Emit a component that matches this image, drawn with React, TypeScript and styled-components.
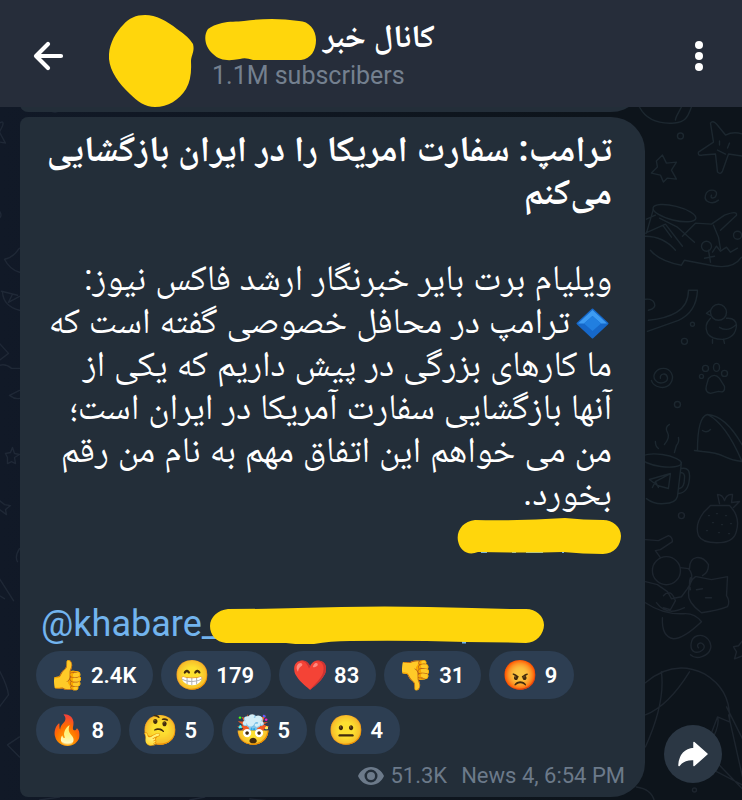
import React from "react";
import styled, { createGlobalStyle } from "styled-components";

const GlobalStyle = createGlobalStyle`
  * { box-sizing: border-box; }
  body { margin: 0; background: #0d141b; }
  button { border: 0; padding: 0; font: inherit; color: inherit; cursor: pointer; }
`;

const latin = `Roboto, "Noto Naskh Arabic", sans-serif`;
const marker = "#ffd60c";

const Page = styled.div`
  min-height: 100vh;
  display: flex;
  flex-direction: column;
  font-family: ${latin};
  color: #fff;
`;

const Header = styled.header`
  height: 107px;
  display: flex;
  align-items: center;
  padding: 0 22px 0 28px;
  background: #262d3a;
`;

const IconButton = styled.button`
  width: 42px;
  height: 42px;
  display: grid;
  place-items: center;
  background: none;
`;

const Avatar = styled.div`
  width: 86px;
  height: 93px;
  margin: 14px 9px 0 39px;
`;

const Identity = styled.div`
  flex: 1;
  min-width: 0;
  padding-top: 4px;
`;

const NameRow = styled.div`
  display: flex;
  align-items: center;
  gap: 6px;
  height: 40px;
`;

const ChannelName = styled.h1`
  margin: 0 0 8px;
  font-size: 32px;
  font-weight: 700;
  line-height: 40px;
  white-space: nowrap;
`;

const Subscribers = styled.div`
  padding-left: 8px;
  font-size: 25px;
  line-height: 32px;
  color: #74808f;
`;

const Chat = styled.main`
  flex: 1;
  position: relative;
  overflow: hidden;
  display: grid;
  grid-template-columns: 20px minmax(0, 625px) 1fr;
  grid-template-rows: 5px auto;
  row-gap: 5px;
  align-content: start;
  padding-bottom: 4px;
  background: linear-gradient(90deg, #111927, #0d141b 80%);
`;

const Wallpaper = styled.svg`
  position: absolute;
  inset: 0;
  width: 100%;
  height: 100%;
`;

const PreviousBubble = styled.div`
  grid-column: 2;
  height: 80px;
  margin-top: -75px;
  border-radius: 8px 34px 34px 8px;
  background: #232e39;
  position: relative;
`;

const Bubble = styled.article`
  grid-column: 2;
  position: relative;
  padding: 11px 0 0;
  border-radius: 8px 34px 34px 8px;
  background: #232e39;
`;

const Copy = styled.div`
  padding: 0 33px 0 21px;
  font-size: 36px;
  line-height: 43px;
`;

const Line = styled.span`
  display: block;
  height: 43px;
  white-space: nowrap;
`;

const Headline = styled.h2`
  margin: 0 0 43px;
  font: inherit;
  font-weight: 700;
`;

const Paragraph = styled.p`
  margin: 0;
`;

const Diamond = styled.svg`
  margin: 0 3px 0 6px;
  vertical-align: -6px;
`;

const SignatureRow = styled.div`
  height: 88px;
  padding-top: 3px;
  display: flex;
  margin-right: -9px;
  justify-content: flex-end;
`;

const HandleRow = styled.div`
  height: 43px;
  display: flex;
  align-items: center;
`;

const Handle = styled.a`
  color: #72b4ee;
  text-decoration: none;
`;

const Scribble = styled.svg<{ $pull?: number }>`
  display: block;
  flex: none;
  margin-left: ${(p) => -(p.$pull ?? 0)}px;
`;

const Reactions = styled.div`
  display: grid;
  gap: 7px;
  padding: 5px 16px 0;
`;

const ReactionRow = styled.div`
  display: flex;
  gap: 8px;
`;

const Reaction = styled.button`
  height: 48px;
  min-width: 85px;
  display: flex;
  align-items: center;
  justify-content: space-between;
  gap: 5px;
  padding: 0 17px 0 13px;
  border-radius: 24px;
  background: #2d3e52;
  font-size: 22px;
  font-weight: 600;
`;

const Emoji = styled.span`
  width: 37px;
  font-family: "Noto Color Emoji", sans-serif;
  font-size: 29px;
  font-weight: 400;
  line-height: 48px;
  display: flex;
  justify-content: center;
`;

const Meta = styled.footer`
  display: flex;
  align-items: center;
  justify-content: flex-end;
  height: 43px;
  padding-right: 20px;
  font-size: 22px;
  color: #6c7a8a;
`;

const Views = styled.span`
  margin: 0 14px 0 6px;
`;

const ShareButton = styled.button`
  grid-column: 3;
  align-self: end;
  position: relative;
  width: 58px;
  height: 58px;
  margin: 0 0 14px 19px;
  border-radius: 50%;
  display: grid;
  place-items: center;
  background: #2b3744;
`;

const reactionRows = [
  [
    ["👍", "2.4K"],
    ["😁", "179"],
    ["❤️", "83"],
    ["👎", "31"],
    ["😡", "9"],
  ],
  [
    ["🔥", "8"],
    ["🤔", "5"],
    ["🤯", "5"],
    ["😐", "4"],
  ],
];

const body = [
  "ما کارهای بزرگی در پیش داریم که یکی از",
  "آنها بازگشایی سفارت آمریکا در ایران است؛",
  "من می خواهم این اتفاق مهم به نام من رقم",
  "بخورد.",
];

function Doodles() {
  return (
    <Wallpaper viewBox="0 107 742 693" preserveAspectRatio="xMidYMin slice" fill="none" strokeWidth="1.4" strokeLinecap="round" strokeLinejoin="round" aria-hidden="true">
      <g stroke="#1c272f">
        <path d="M639 107c8 15 22 17 35 16s14-9 17-16M681 107c-3 6-6 10-6 13" />
        <circle cx="680" cy="136" r="3" />
        <path d="M710 123q2-3 6 1l9 11q8-4 17-1M710 123l3 19-15 10q-1 4 4 3l13-1 2 18q3 3 5-1l6-17 14 2M719 141v4M729 143l-2 5M717 150l8 4" />
        <path d="M662 155l4 8 10-1-5 8 5 9-9-1-4 4-3-7-9-2 6-6-1-6z" />
        <path d="M711 195c-2 4 4 4 5-1s-9-6-11 1 7 10 13 5" />
        <ellipse cx="674" cy="213" rx="22" ry="7" transform="rotate(14 674 213)" />
        <path d="M653 209l-7 24M646 219l9-4M645 233l20-9 17 22M663 226l8 11M659 218l18 9 17 15M682 236l13-13 16 1 13-9q13-5 12 0l-16 15M645 236q18 0 30 14M713 225l5 12 2 12" />
        <circle cx="737" cy="235" r="4" /><circle cx="706" cy="246" r="5" />
        <path d="M712 252l4-6 4 5 6-4 4 5 7-4M650 250q9 11 31 15l3-5 26 5q22 5 31-8M708 250l2 12M704 258l10-2" />
        <path d="M688 290l9 0q-1 22-19 30-14 5-31 11M688 290q0 15-12 22-10 6-28 8" />
        <path d="M645 299q7-1 9 4t-6 7" />
        <circle cx="684" cy="341" r="3" /><circle cx="692" cy="324" r="2" /><circle cx="677" cy="404" r="3" />
        <circle cx="718" cy="312" r="8" />
        <path d="M710 310l-4 3 4 2M710 318q-7 7-3 15 4 6 15 6 13-1 14-14-1-8-10-7M712 339v4M723 339l1 4M719 327q8 5 16-2" />
        <path d="M660 378c-1-5 6-6 7-1s-8 8-12 3 1-12 8-12 12 8 7 15-17 4-19-3" />
        <path d="M708 378q6-6 11 0l5 8q1 7-6 5l-8 2q-6-1-4-8z" />
        <circle cx="705" cy="368" r="3" /><ellipse cx="716" cy="367" rx="3" ry="4" /><circle cx="724" cy="373" r="3" /><circle cx="701" cy="376" r="2" />
        <path d="M697 450q0-34 10-36 18 1 35 31M694 450l8 1q14 1 22 5t18 5M707 414q18 9 34 46M702 430q4 3 8-1" />
        <path d="M669 424q-5 3-2 8t-3 12M678 437q1 5-2 8l-2 7M655 441q0 5 3 7" />
        <ellipse cx="661" cy="460" rx="20" ry="6" transform="rotate(8 661 460)" />
        <path d="M681 462l-4 34q-2 7-13 7-10 1-18-5M681 468q9-2 8 10-1 14-11 15M680 472q5 0 4 6 0 9-5 10M649 479l21-6-2 15-11-3zM670 473l-15 8-3 6M655 481l3 6" />
      </g>
      <g stroke="#1d252e">
        <path d="M719 503l-2-9q5 0 7 6 2-7 8-6l-1 8 8-1-6 6M710 505h19q11 11 7 25-2 11-16 12-18 1-22-7-4-11 5-23zM708 515h1M716 513h1M725 515h1M712 522h1M721 524h1M730 523h1M706 530h1M718 532h1M728 533h1" />
        <circle cx="681" cy="515" r="3" /><circle cx="666" cy="570" r="14" />
        <path d="M645 539l13 1 10-5q4 1 4 6l-12 8-5 1 5 7M680 567l8 1q7 7-1 20l-6 8-10 2-4-7-10-7-12-3M689 568q0-10 7-11t12 7q0 8-6 11M690 577q-2 5 0 12M696 576l15 3 16-3-1 19q4 6 1 11-10 4-26 6-14-10-13-20 1-12 7-16M645 602q18 12 38 11 11-1 18 8-18 17-28 17-12-2-11-21M656 602q10 14 28 5M663 595q7-8 12 5l-5 9-7-2M696 589l6-1M705 597h6" />
        <path d="M698 647c-3-3 2-7 5-3s-4 9-9 7-5-14 3-16 15 6 13 13-14 12-20 6M742 640l-4 5-5 1 3 5-2 7 8-3" />
        <path d="M645 682q28-24 59-9 27 16 25 48l-12-5-14 37M661 671q4 31-16 75M689 671q-21 34-44 43M717 716q3 8-8 28M726 706l16 32M728 714l14 62M709 754l33 34M705 765l37 19M636 786q15 2 18 14" />
        <circle cx="694" cy="789" r="2" />
      </g>
      <g stroke="#1f2836">
        <path d="M0 123q5-3 3 3l-3 6 6 11-6-1M0 211q3 4 0 7M20 248q-7 10-15 11 5 10 15 13M2 291l16 4M3 292q1 14 17 18M13 294l-4 8 11-6M0 343l9 10-9 7M0 365q6-2 12 3h8M20 390l-10 5q5 4 10 3M13 447l2 6 5 1-5 3 1 6-4-2-4 2v-6l-2-4 5-1zM0 500l5 4 6 1-5 4 1 5-7-5M20 548q-5 8-2 13M0 578l14 22M0 595l5 3M0 670q8 15 9 24L0 706M20 736l-12 8 12 12" />
        <path d="M50 110q5 4 12 0M180 111l12-4M340 111l10-2M40 799l20-3M190 799l15-3M250 798l20 2" />
      </g>
    </Wallpaper>
  );
}

export default function App() {
  return (
    <Page>
      <GlobalStyle />
      <Header>
        <IconButton aria-label="Back">
          <svg width="42" height="42" viewBox="0 0 42 42" fill="none" stroke="#fff" strokeWidth="4.2" strokeLinecap="round" strokeLinejoin="round">
            <path d="M33 23H9M20 11L8 23 20 35" />
          </svg>
        </IconButton>
        <Avatar>
          <svg width="86" height="93" viewBox="0 0 86 93" role="img" aria-label="Channel photo">
            <path fill={marker} d="M36 1C47 1 58 7 68 15q12 8 16 15c2 8-2 11-2 18q1 17-5 27C70 86 59 93 46 93c-10 0-18-6-25-13C10 70 1 57 0 45-1 32 6 19 14 11 20 4 27 1 36 1z" />
          </svg>
        </Avatar>
        <Identity>
          <NameRow>
            <svg width="113" height="42" viewBox="0 0 113 42" aria-hidden="true">
              <path fill={marker} d="M18 4C25 2 33 3 40 2q28-4 55 0c10 0 17 9 17 19s-5 19-15 20H49q-8-3-13-1C25 42 16 42 9 35 1 28-1 17 4 10q5-4 14-6z" />
            </svg>
            <ChannelName lang="fa" dir="rtl">کانال خبر</ChannelName>
          </NameRow>
          <Subscribers>1.1M subscribers</Subscribers>
        </Identity>
        <IconButton aria-label="More options">
          <svg width="12" height="36" viewBox="0 0 12 36" fill="#fff">
            <circle cx="6" cy="9" r="4" /><circle cx="6" cy="20" r="4" /><circle cx="6" cy="31" r="4" />
          </svg>
        </IconButton>
      </Header>
      <Chat>
        <Doodles />
        <PreviousBubble />
        <Bubble>
          <Copy>
            <div lang="fa" dir="rtl">
              <Headline>
                <Line>ترامپ: سفارت امریکا را در ایران بازگشایی</Line>
                <Line>می‌کنم</Line>
              </Headline>
              <Paragraph>
                <Line>ویلیام برت بایر خبرنگار ارشد فاکس نیوز:</Line>
                <Line>
                  <Diamond width="33" height="31" viewBox="0 0 33 31" role="img" aria-label="🔷">
                    <path fill="#1668c9" stroke="#1668c9" strokeWidth="2" strokeLinejoin="round" d="M16.500 1.500L31.500 15.500 16.500 29.500 1.500 15.500z" />
                    <path fill="#3d9bf2" d="M16.500 2L31 15.500H25L16.500 8 8 15.500H2z" />
                    <path fill="#217fe0" d="M16.500 8l8.500 7.500-8.500 7.500L8 15.500z" />
                  </Diamond>
                  ترامپ در محافل خصوصی گفته است که
                </Line>
                {body.map((text) => <Line key={text}>{text}</Line>)}
              </Paragraph>
            </div>
            <SignatureRow>
              <Scribble width="164" height="36" viewBox="0 0 164 36" aria-hidden="true">
                <path stroke="#72b4ee" strokeWidth="2" d="M24 34h6M55 34h4M69 34h17M88 33h4M105 34h2" />
                <path fill={marker} d="M18 2Q60 3 108 0q18 2 38 2c10 0 18 7 18 16s-7 18-18 18q-20 0-40-2-40 1-85 0C11 38 3 33 1 23S6 3 18 2z" />
              </Scribble>
            </SignatureRow>
            <HandleRow>
              <Handle href="#khabare">@khabare_</Handle>
              <Scribble $pull={8} width="334" height="38" viewBox="0 0 334 38" aria-hidden="true">
                <path stroke="#72b4ee" strokeWidth="3" d="M35 35h5M77 35h2M252 36h4" />
                <path fill={marker} d="M18 3Q60 3 88 2q86-3 174 0 26 1 54 1c10 0 18 7 18 16s-8 18-18 18q-30-1-60-1-60-2-116-1-20 0-36 3-14 1-28-1-34 0-60 0C6 36 0 29 0 20S8 4 18 3z" />
              </Scribble>
            </HandleRow>
          </Copy>
          <Reactions>
            {reactionRows.map((row, i) => (
              <ReactionRow key={i}>
                {row.map(([emoji, count]) => (
                  <Reaction key={emoji}><Emoji>{emoji}</Emoji>{count}</Reaction>
                ))}
              </ReactionRow>
            ))}
          </Reactions>
          <Meta>
            <svg width="26" height="18" viewBox="0 0 26 18" aria-hidden="true">
              <path fill="#6c7a8a" fillRule="evenodd" d="M13 0c6 0 11 4 13 9-2 5-7 9-13 9S2 14 0 9c2-5 7-9 13-9zm0 2.500a6.500 6.500 0 1 0 0 13 6.500 6.500 0 0 0 0-13z" />
              <circle cx="13" cy="9" r="4" fill="#6c7a8a" />
            </svg>
            <Views>51.3K</Views>
            <time>News 4, 6:54 PM</time>
          </Meta>
        </Bubble>
        <ShareButton aria-label="Share">
          <svg width="32" height="28" viewBox="0 0 32 28" fill="#fff" stroke="#fff" strokeWidth="1.500" strokeLinejoin="round">
            <path d="M17 2.500L30 14 17 25.500V19.500C10 19 5.500 20.500 2 25.500 2.500 16 7.500 9.500 17 8.500z" />
          </svg>
        </ShareButton>
      </Chat>
    </Page>
  );
}
